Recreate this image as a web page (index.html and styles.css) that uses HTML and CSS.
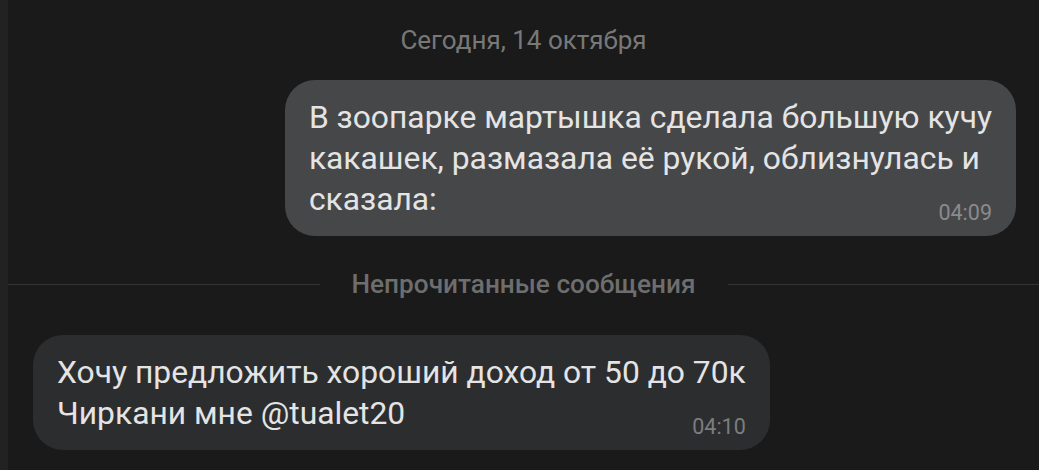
FILE: index.html
```html
<!DOCTYPE html>
<html>

	<head>
		<meta charset="UTF-8">
		<title>Чат</title>
		<link rel="stylesheet" href="styles.css">
	</head>

	<body>
		<div id="chat">
			<div class="date">Сегодня, 14 октября</div>
			<div class="row out">
				<div class="msg">
					<p>В зоопарке мартышка сделала большую кучу<br>какашек, размазала её рукой, облизнулась и<br>сказала:</p>
					<span class="time">04:09</span>
				</div>
			</div>
			<div class="unread"><span>Непрочитанные сообщения</span></div>
			<div class="row in">
				<div class="msg">
					<p>Хочу предложить хороший доход от 50 до 70к<br>Чиркани мне @tualet20</p>
					<span class="time">04:10</span>
				</div>
			</div>
		</div>
	</body>

</html>
```

FILE: styles.css
```css
body,
p {
	margin: 0;
	padding: 0;
}

body {
	background: #1a1a1a;
	font-family: Roboto, "Noto Sans", sans-serif;
	height: 470px;
	overflow: hidden;
}

#chat {
	border-left: 8px solid #222222;
	height: 470px;
	padding-top: 25px;
	box-sizing: border-box;
}

.date {
	font-size: 26px;
	line-height: 30px;
	color: #787878;
	text-align: center;
}

.row {
	display: flex;
}

.row.out {
	justify-content: flex-end;
	margin-top: 25px;
	padding-right: 23px;
}

.row.in {
	justify-content: flex-start;
	margin-top: 36px;
	padding-left: 25px;
}

.msg {
	border-radius: 30px;
	padding: 17px 24px 13px 24px;
	color: #e4e4e4;
}

.out .msg {
	background: #464749;
}

.in .msg {
	background: #2c2d2f;
}

.msg p {
	font-size: 31.8px;
	line-height: 41px;
}

.time {
	display: block;
	text-align: right;
	font-size: 21.5px;
	line-height: 20px;
	margin-top: -17px;
}

.out .time {
	color: #8a8b8d;
}

.in .time {
	color: #7c7d7f;
}

.unread {
	display: flex;
	align-items: center;
	gap: 32px;
	margin-top: 33px;
	font-size: 26.2px;
	line-height: 30px;
	font-weight: 500;
	color: #6e6e6e;
}

.unread::before,
.unread::after {
	content: "";
	flex: 1;
	height: 1px;
	background: #333333;
}
```
